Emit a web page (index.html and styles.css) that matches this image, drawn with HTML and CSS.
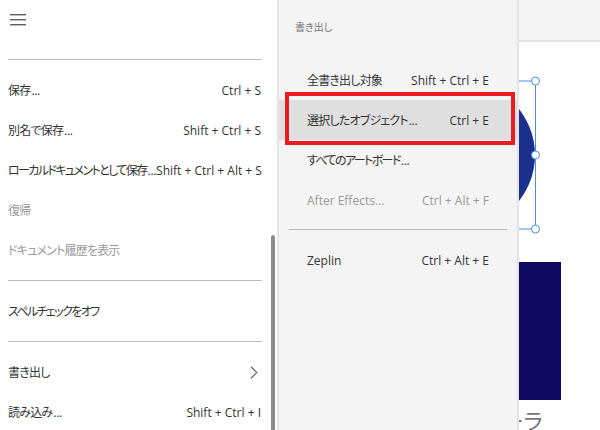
FILE: index.html
```html
<!DOCTYPE html>
<html lang="ja">
<head>
<meta charset="utf-8">
<link rel="stylesheet" href="styles.css">
</head>
<body>
<div class="app">
  <aside class="main-menu">
    <div class="menu-top">
      <svg class="hamburger" width="16" height="12" viewBox="0 0 16 12">
        <rect x="0" y="0" width="16" height="1.4" fill="#5f5f5f"/>
        <rect x="0" y="5" width="16" height="1.4" fill="#5f5f5f"/>
        <rect x="0" y="10" width="16" height="1.4" fill="#5f5f5f"/>
      </svg>
    </div>
    <div class="divider first"></div>
    <div class="item"><span class="lbl">保存<span class="dots">...</span></span><span>Ctrl + S</span></div>
    <div class="item"><span class="lbl">別名で保存<span class="dots">...</span></span><span>Shift + Ctrl + S</span></div>
    <div class="item"><span class="lbl tight">ローカルドキュメントとして保存<span class="dots">...</span></span><span>Shift + Ctrl + Alt + S</span></div>
    <div class="item disabled"><span class="lbl">復帰</span></div>
    <div class="item disabled"><span class="lbl">ドキュメント履歴を表示</span></div>
    <div class="divider"></div>
    <div class="item"><span class="lbl tight">スペルチェックをオフ</span></div>
    <div class="divider"></div>
    <div class="item"><span class="lbl">書き出し</span>
      <svg class="chevron" width="8" height="13" viewBox="0 0 8 13"><path d="M1 0.8 L6.8 6.5 L1 12.2" fill="none" stroke="#666" stroke-width="1.2"/></svg>
    </div>
    <div class="item"><span class="lbl">読み込み<span class="dots">...</span></span><span>Shift + Ctrl + I</span></div>
    <div class="scrollbar"></div>
  </aside>

  <section class="submenu">
    <div class="sub-header">書き出し</div>
    <div class="sub-item"><span class="lbl">全書き出し対象</span><span>Shift + Ctrl + E</span></div>
    <div class="sub-item active"><span class="lbl">選択したオブジェクト<span class="dots">...</span></span><span>Ctrl + E</span></div>
    <div class="sub-item"><span class="lbl tight">すべてのアートボード<span class="dots">...</span></span></div>
    <div class="sub-item disabled"><span>After Effects...</span><span>Ctrl + Alt + F</span></div>
    <div class="sub-divider"></div>
    <div class="sub-item"><span>Zeplin</span><span>Ctrl + Alt + E</span></div>
    <div class="highlight-box"></div>
  </section>

  <section class="canvas">
    <div class="canvas-bar"></div>
    <div class="artboard">
      <svg class="art" width="81" height="260" viewBox="0 0 81 260">
        <circle cx="-58" cy="155" r="74" fill="#1b2f8c"/>
        <path d="M0 81 H12.5 M16.5 85 V151 M16.5 159 V225 M0 229 H12.5" stroke="#4a8ee4" stroke-width="1" fill="none"/>
        <circle cx="16.5" cy="81" r="4" fill="#fff" stroke="#4a8ee4" stroke-width="1"/>
        <circle cx="16.5" cy="155" r="4" fill="#fff" stroke="#4a8ee4" stroke-width="1"/>
        <circle cx="16.5" cy="229" r="4" fill="#fff" stroke="#4a8ee4" stroke-width="1"/>
      </svg>
      <div class="navy-rect"></div>
      <div class="art-text">ーラ</div>
    </div>
  </section>
</div>
</body>
</html>
```

FILE: styles.css
```css
html, body {
  margin: 0;
  padding: 0;
}
body {
  width: 600px;
  height: 430px;
  overflow: hidden;
  font-family: "Open Sans", "Noto Sans CJK JP", sans-serif;
  font-size: 12px;
  font-feature-settings: "palt";
  color: #333;
  background: #fff;
}
.app {
  display: flex;
  width: 600px;
  height: 430px;
  overflow: hidden;
}
.main-menu {
  position: relative;
  width: 277px;
  flex: 0 0 277px;
  background: #fff;
}
.menu-top {
  height: 59px;
  padding: 14px 0 0 10px;
  box-sizing: border-box;
}
.hamburger {
  display: block;
}
.divider {
  height: 1px;
  background: #bcbcbc;
  margin: 10px 15px 10px 8px;
}
.divider.first {
  margin-top: 0;
}
.item {
  display: flex;
  justify-content: space-between;
  align-items: center;
  height: 40px;
  padding: 0 16px 0 8px;
  white-space: nowrap;
}
.item.disabled {
  color: #9a9a9a;
}
.lbl {
  letter-spacing: -0.8px;
}
.lbl.tight {
  letter-spacing: -1.6px;
}
.lbl .dots {
  letter-spacing: -0.3px;
  margin-left: 1px;
}
.chevron {
  margin-right: 3px;
}
.scrollbar {
  position: absolute;
  left: 271px;
  top: 235px;
  width: 4px;
  height: 200px;
  background: #8c8c8c;
  border-radius: 2px 2px 0 0;
}
.submenu {
  position: relative;
  width: 238px;
  flex: 0 0 238px;
  background: #f4f4f4;
  border-left: 2px solid #e6e6e6;
  border-right: 2px solid #e3e3e3;
}
.sub-header {
  height: 60px;
  padding: 20px 0 0 16px;
  box-sizing: border-box;
  font-size: 10px;
  line-height: 14px;
  color: #777;
}
.sub-item {
  display: flex;
  justify-content: space-between;
  align-items: center;
  height: 40px;
  padding: 0 28px;
  white-space: nowrap;
}
.sub-item.active {
  background: #dfdfdf;
}
.sub-item.disabled {
  color: #9a9a9a;
}
.sub-divider {
  height: 1px;
  background: #b8b8b8;
  margin: 9px 10px 10px 10px;
}
.highlight-box {
  position: absolute;
  left: 6px;
  top: 92px;
  width: 230px;
  height: 53px;
  box-sizing: border-box;
  border: 4px solid #ec1b23;
}
.canvas {
  flex: 1;
  position: relative;
  background: #fff;
  overflow: hidden;
}
.canvas-bar {
  height: 40px;
  background: #f4f4f4;
  border-bottom: 2px solid #e3e3e3;
}
.artboard {
  position: absolute;
  left: 0;
  top: 0;
  width: 81px;
  height: 430px;
}
.art {
  position: absolute;
  left: 0;
  top: 0;
}
.navy-rect {
  position: absolute;
  left: 0;
  top: 262px;
  width: 42px;
  height: 138px;
  background: #0f0961;
}
.art-text {
  position: absolute;
  left: -17px;
  top: 404px;
  font-family: "Noto Sans CJK JP", sans-serif;
  font-size: 22px;
  line-height: 30px;
  color: #777;
  white-space: nowrap;
}
```
